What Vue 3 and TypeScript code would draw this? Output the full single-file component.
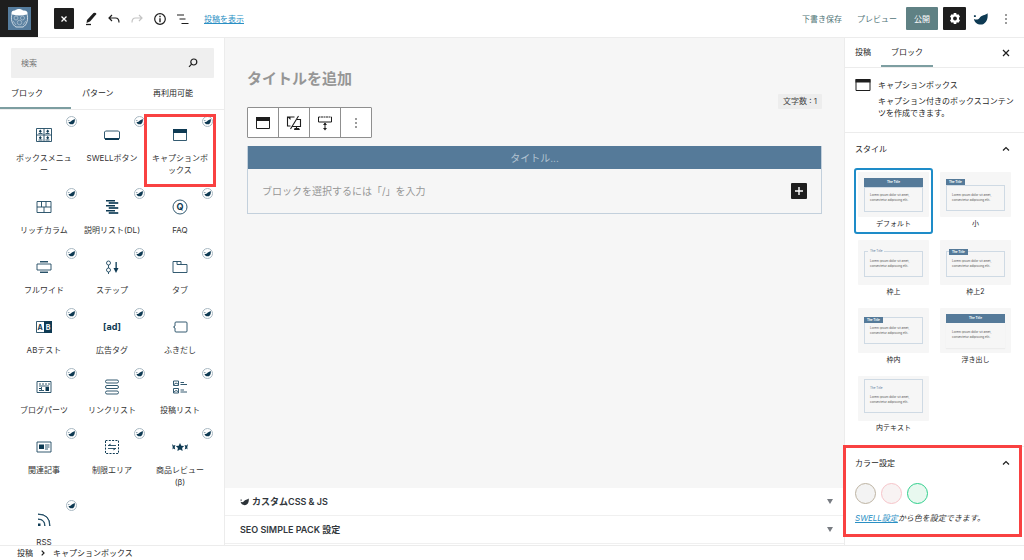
<script setup lang="ts">
import { ref } from 'vue'

interface Glyph { x: number; t: string; size: number; light?: boolean }
interface Block {
  name: string
  line?: string
  solid?: string
  dashed?: string
  glyphs?: Glyph[]
  marked?: boolean
}
interface Variation { name: string; kind: string }

const whale = 'M15.500 2.500C16.500 9.500 13 14.500 8.500 14.500C4.500 14.500 1.500 12 1 8.500C3 9.500 5.500 9.500 7 7.500C9 4.300 13 5 15.500 2.500ZM1 4.500h2v2h-2z'

const blocks: Block[] = [
  {
    name: 'ボックスメニュー',
    line: 'M.5 1.500h15v13h-15zM8 1.500v13M.5 8h15M2.500 6.500h4M9.500 6.500h4M2.500 13h4M9.500 13h4',
    solid: 'M4.300 2.500l1.500 1.800l-1.500 1.800l-1.500-1.800zM11.700 2.500l1.500 1.800l-1.500 1.800l-1.500-1.800zM4.300 9l1.500 1.800l-1.500 1.800l-1.500-1.800zM11.700 9l1.500 1.800l-1.500 1.800l-1.500-1.800z',
  },
  { name: 'SWELLボタン', line: 'M1.500 4h13l1 1v6.500l-1 1h-13l-1-1v-6.500z', solid: 'M1 11h14v2h-14z' },
  { name: 'キャプションボックス', line: 'M1.500 2.500h13v11h-13z', solid: 'M1 2h14v4h-14z', marked: true },
  { name: 'リッチカラム', line: 'M1 2.500h14v11h-14zM1 8h14M5.500 2.500v5.500M10 2.500v5.500M8 8v5.500' },
  { name: '説明リスト(DL)', line: 'M5 3.500h9v1h-9zM5 8.500h9v1h-9zM5 13.500h9v1h-9z', solid: 'M2 1h9v1.500h-9zM2 6h9v1.500h-9zM2 11h9v1.500h-9z' },
  { name: 'FAQ', line: 'M15 8a7 7 0 1 1-14 0a7 7 0 1 1 14 0z', glyphs: [{ x: 8, t: 'Q', size: 9 }] },
  { name: 'フルワイド', line: 'M1 5h14v6h-14zM4 2.500h8M4 13.500h8M4 3h8M4 13h8' },
  { name: 'ステップ', line: 'M6.500 4a2 2 0 1 1-4 0a2 2 0 1 1 4 0zM6.500 11a2 2 0 1 1-4 0a2 2 0 1 1 4 0zM4.500 6v3M4.500 13v2M12 3v8M12.300 3v8', solid: 'M9.500 9h5l-2.500 5z' },
  { name: 'タブ', line: 'M1 13.500v-11h8v3h6v8zM5 2.500v3h4' },
  { name: 'ABテスト', line: 'M.5 2.500h15v11h-15z', solid: 'M8 2h8v12h-8z', glyphs: [{ x: 4, t: 'A', size: 7 }, { x: 12, t: 'B', size: 7, light: true }] },
  { name: '広告タグ', glyphs: [{ x: 8, t: '[ad]', size: 9 }] },
  { name: 'ふきだし', line: 'M4 3h10q1 0 1 1v8q0 1-1 1h-10q-1 0-1-1v-3l-1.500-1l1.500-1v-3q0-1 1-1z' },
  { name: 'ブログパーツ', line: 'M1 2.500h14v11h-14zM3 5h2M6 5h2M9 5h2M12 5h2M3 7h10M3 11.500h5M5.500 8v3', solid: 'M9.500 8h3.500v4h-3.500zM3 9h2v1h-2z' },
  { name: 'リンクリスト', line: 'M3 1h10q1.500 0 1.500 1.500t-1.500 1.500h-10q-1.500 0-1.500-1.500t1.500-1.500zM3 6.500h10q1.500 0 1.500 1.500t-1.500 1.500h-10q-1.500 0-1.500-1.500t1.500-1.500zM3 12h10q1.500 0 1.500 1.500t-1.500 1.500h-10q-1.500 0-1.500-1.500t1.500-1.500z' },
  { name: '投稿リスト', line: 'M1.500 2h5v4.500h-5zM1.500 9.500h5v4.500h-5zM8.500 3.500h3.500M8.500 5.500h6.500M8.500 11h3.500M8.500 13h6.500M2 5.500l2-1.500l2 1M2 13l2-1.500l2 1' },
  { name: '関連記事', line: 'M1 3h14v10h-14zM9 6h4.500M9 8h4.500M9 10h3', solid: 'M3 5.500h5v4.500h-5z' },
  { name: '制限エリア', dashed: 'M1.500 1.500h13v13h-13z', line: 'M4 6.500h8M4 9.500h8', solid: 'M4 6.500l2.500-2v2zM12 9.500l-2.500 2v-2z' },
  { name: '商品レビュー(β)', solid: 'M8 4l1.300 2.700l2.900.4l-2.100 2l.5 2.900l-2.600-1.400l-2.600 1.400l.5-2.900l-2.100-2l2.900-.4zM0 5l1.500 1.500l2-.500l-.8 2l.5 2.500l-1.700-1l-1 1l.2-2.500zM16 5l-1.500 1.500l-2-.5l.8 2l-.5 2.500l1.700-1l1 1l-.2-2.500z' },
  { name: 'RSS', line: 'M2 3q12 0 12 12M2 3.300q11.700 0 11.700 11.700M2 8q7 0 7 7M2 8.300q6.700 0 6.700 6.700', solid: 'M2 12.500h2.500v2.500h-2.500z' },
]

const variations: Variation[] = [
  { name: 'デフォルト', kind: 'bar' },
  { name: '小', kind: 'small' },
  { name: '枠上', kind: 'on-border' },
  { name: '枠上2', kind: 'on-border2' },
  { name: '枠内', kind: 'inside' },
  { name: '浮き出し', kind: 'raised' },
  { name: '内テキスト', kind: 'inner-text' },
]

const colors = ['sand', 'pink', 'green']
const selected = ref('bar')
const query = ref('')
const postTitle = ref('')
const captionTitle = ref('')
</script>

<template>
  <div class="editor">
    <header class="topbar">
      <a class="site" href="#" aria-label="サイト">
        <svg width="23" height="23" viewBox="0 0 23 23">
          <rect width="23" height="23" fill="#557c9d" />
          <path d="M4 7C2.500 12 4 18 8 20H15C19 18 20.500 12 19 7Z" fill="#5d83a2" stroke="#cdd9e3" stroke-width="1" />
          <circle cx="8" cy="11" r="2" fill="none" stroke="#9fb6c9" /><circle cx="14.500" cy="11" r="2" fill="none" stroke="#9fb6c9" />
          <circle cx="11.500" cy="15.500" r="2.200" fill="none" stroke="#9fb6c9" /><path d="M5 14l3 4M18 14l-3 4" stroke="#9fb6c9" />
          <path d="M3.500 7C3 4 5.500 3 7 3.500C9 1.500 13 1.500 15 3.500C18 3 20 4.500 19.500 7Q11.500 10 3.500 7Z" fill="#fff" />
        </svg>
      </a>
      <div class="tools">
        <button class="close-inserter" aria-label="閉じる">
          <svg width="8" height="8" viewBox="0 0 8 8"><path d="M1.500 1.500l5 5M6.500 1.500l-5 5" stroke="#fff" stroke-width="1.300" /></svg>
        </button>
        <button class="tool" aria-label="編集">
          <svg width="16" height="16" viewBox="0 0 16 16"><path d="M4 9L10.500 2Q12.500 1 13.500 3L7 10.500L3.500 12Z" fill="#1e1e1e" /><path d="M3 13.500h5" stroke="#1e1e1e" stroke-width="1.300" /></svg>
        </button>
        <button class="tool" aria-label="元に戻す">
          <svg width="16" height="16" viewBox="0 0 16 16" fill="none" stroke="#1e1e1e" stroke-width="1.200"><path d="M6 4L3 7l3 3M3 7h6.500q3.500 0 3.500 4.500" /></svg>
        </button>
        <button class="tool" aria-label="やり直す" disabled>
          <svg width="16" height="16" viewBox="0 0 16 16" fill="none" stroke="#c4c4c4" stroke-width="1.200"><path d="M10 4l3 3l-3 3M13 7h-6.500q-3.500 0-3.500 4.500" /></svg>
        </button>
        <button class="tool" aria-label="詳細">
          <svg width="16" height="16" viewBox="0 0 16 16"><circle cx="8" cy="8" r="5.300" fill="none" stroke="#1e1e1e" stroke-width="1.200" /><path d="M8 7.300v4M8 4.800v1.400" stroke="#1e1e1e" stroke-width="1.400" /></svg>
        </button>
        <button class="tool" aria-label="リスト表示">
          <svg width="16" height="16" viewBox="0 0 16 16" stroke="#1e1e1e" stroke-width="1.200"><path d="M2 4h7M4.500 8h6M6.500 12.500h7" /></svg>
        </button>
        <a class="link" href="#">投稿を表示</a>
      </div>
      <div class="actions">
        <button class="text-action">下書き保存</button>
        <button class="text-action">プレビュー</button>
        <button class="publish">公開</button>
        <button class="gear" aria-label="設定">
          <svg width="14" height="14" viewBox="0 0 14 14"><path d="M5.800 1h2.400l.5 1.700l1.700-.5l1.600 2.300l-1 1.300v1.400l1 1.300l-1.600 2.300l-1.700-.5l-.5 1.700h-2.400l-.5-1.700l-1.700.5l-1.600-2.300l1-1.300v-1.400l-1-1.300l1.600-2.300l1.700.5z" fill="#fff" /><circle cx="7" cy="6.500" r="1.900" fill="#1e1e1e" /></svg>
        </button>
        <button class="tool whale" aria-label="SWELL">
          <svg width="15" height="15" viewBox="0 0 16 16"><path :d="whale" fill="#0e3a53" /></svg>
        </button>
        <button class="tool more" aria-label="オプション">
          <svg width="4" height="12" viewBox="0 0 4 12" fill="#1e1e1e"><circle cx="2" cy="2" r=".8" /><circle cx="2" cy="6" r=".8" /><circle cx="2" cy="10" r=".8" /></svg>
        </button>
      </div>
    </header>

    <div class="body">
      <aside class="inserter">
        <label class="search">
          <input v-model="query" type="text" placeholder="検索" aria-label="検索" />
          <svg width="10" height="10" viewBox="0 0 10 10" fill="none" stroke="#1e1e1e" stroke-width="1.200"><circle cx="5.800" cy="4" r="3" /><path d="M3.600 6.200L1 8.800" /></svg>
        </label>
        <div class="tabs">
          <button class="tab active">ブロック</button>
          <button class="tab">パターン</button>
          <button class="tab">再利用可能</button>
        </div>
        <div class="blocks">
          <button v-for="b in blocks" :key="b.name" class="block" :class="{ marked: b.marked }">
            <svg class="glyph" width="16" height="16" viewBox="0 0 16 16">
              <path v-if="b.dashed" :d="b.dashed" fill="none" stroke="#0e3a53" stroke-dasharray="2 1.300" />
              <path v-if="b.line" :d="b.line" fill="none" stroke="#1d4861" stroke-width=".9" />
              <path v-if="b.solid" :d="b.solid" fill="#0e3a53" />
              <text v-for="g in b.glyphs" :key="g.t" :x="g.x" :y="8 + g.size * 0.36" :font-size="g.size" :fill="g.light ? '#fff' : '#0e3a53'" font-weight="700" text-anchor="middle">{{ g.t }}</text>
            </svg>
            <span class="label">{{ b.name }}</span>
            <span class="badge"><svg width="7" height="7" viewBox="0 0 16 16"><path :d="whale" fill="#0e3a53" /></svg></span>
          </button>
        </div>
      </aside>

      <main class="canvas">
        <div class="content">
          <input v-model="postTitle" class="post-title" type="text" placeholder="タイトルを追加" aria-label="タイトルを追加" />
          <div class="count-row"><span class="count">文字数 : 1</span></div>
          <div class="toolbar">
            <button aria-label="キャプションボックス">
              <svg width="16" height="16" viewBox="0 0 16 16"><path d="M1.500 2.500h13v11h-13z" fill="#fff" stroke="#1e1e1e" /><path d="M1 2h14v4h-14z" fill="#1e1e1e" /></svg>
            </button>
            <button aria-label="表示デバイス">
              <svg width="16" height="16" viewBox="0 0 16 16" fill="none" stroke="#1e1e1e" stroke-width="1.100"><path d="M8.500 2h-7v9h3M11 4.500h3.500v7h-8M12.500 1l-8 13M10.500 11.500v2M8 14h5" /><path d="M1.500 2h3v3zM9 13h4l1 2h-6z" fill="#1e1e1e" stroke="none" /></svg>
            </button>
            <button aria-label="余白">
              <svg width="16" height="16" viewBox="0 0 16 16" fill="none" stroke="#1e1e1e"><path d="M1.500 2v5h13v-5" /><path d="M1.500 2h13" stroke-dasharray="2 .5" /><path d="M8 8v6" /><path d="M8 7.500l2 2.500h-4zM8 15.500l2-2.500h-4z" fill="#1e1e1e" stroke="none" /></svg>
            </button>
            <button aria-label="オプション">
              <svg width="4" height="12" viewBox="0 0 4 12" fill="#1e1e1e"><circle cx="2" cy="2" r=".8" /><circle cx="2" cy="6" r=".8" /><circle cx="2" cy="10" r=".8" /></svg>
            </button>
          </div>
          <section class="caption-box">
            <input v-model="captionTitle" class="caption-title" type="text" placeholder="タイトル..." aria-label="ボックスタイトル" />
            <div class="caption-body">
              <p>ブロックを選択するには「/」を入力</p>
              <button class="add" aria-label="ブロックを追加">
                <svg width="10" height="10" viewBox="0 0 10 10"><path d="M5 1v8M1 5h8" stroke="#fff" stroke-width="1.400" /></svg>
              </button>
            </div>
          </section>
        </div>
        <div class="metaboxes">
          <button class="metabox">
            <svg width="9" height="9" viewBox="0 0 16 16"><path :d="whale" fill="#2c3338" /></svg>
            <span>カスタムCSS &amp; JS</span>
            <svg class="arrow" width="6" height="5" viewBox="0 0 6 5"><path d="M0 0h6l-3 5z" fill="#787c82" /></svg>
          </button>
          <button class="metabox">
            <span>SEO SIMPLE PACK 設定</span>
            <svg class="arrow" width="6" height="5" viewBox="0 0 6 5"><path d="M0 0h6l-3 5z" fill="#787c82" /></svg>
          </button>
        </div>
      </main>

      <aside class="settings">
        <div class="side-tabs">
          <button class="side-tab">投稿</button>
          <button class="side-tab active">ブロック</button>
          <button class="side-close" aria-label="閉じる">
            <svg width="8" height="8" viewBox="0 0 8 8"><path d="M1 1l6 6M7 1l-6 6" stroke="#1e1e1e" stroke-width="1.200" /></svg>
          </button>
        </div>
        <div class="card">
          <svg width="16" height="16" viewBox="0 0 16 16"><path d="M1 2.500h14v11h-14z" fill="#fff" stroke="#1e1e1e" /><path d="M.5 2h15v3.500h-15z" fill="#1e1e1e" /></svg>
          <div>
            <h2>キャプションボックス</h2>
            <p>キャプション付きのボックスコンテンツを作成できます。</p>
          </div>
        </div>
        <section class="panel">
          <button class="panel-title">スタイル
            <svg width="8" height="6" viewBox="0 0 8 6"><path d="M1 4.500l3-3l3 3" fill="none" stroke="#1e1e1e" stroke-width="1.200" /></svg>
          </button>
          <div class="styles">
            <button v-for="v in variations" :key="v.kind" class="style" :class="{ selected: selected === v.kind }" @click="selected = v.kind">
              <span class="thumb" :class="v.kind">
                <span class="t-title">The Title</span>
                <span class="t-body">Lorem ipsum dolor sit amet, consectetur adipiscing elit.</span>
              </span>
              <span class="style-name">{{ v.name }}</span>
            </button>
          </div>
        </section>
        <section class="panel colors">
          <button class="panel-title">カラー設定
            <svg width="8" height="6" viewBox="0 0 8 6"><path d="M1 4.500l3-3l3 3" fill="none" stroke="#1e1e1e" stroke-width="1.200" /></svg>
          </button>
          <div class="swatches">
            <button v-for="c in colors" :key="c" class="swatch" :class="c" :aria-label="c"></button>
          </div>
          <p class="hint"><a class="link" href="#">SWELL設定</a>から色を設定できます。</p>
        </section>
      </aside>
    </div>

    <footer class="crumbs">
      <button>投稿</button>
      <svg width="4" height="6" viewBox="0 0 4 6"><path d="M.7.700l2.300 2.300l-2.300 2.300" fill="none" stroke="#1e1e1e" stroke-width="1.200" /></svg>
      <button>キャプションボックス</button>
    </footer>
  </div>
</template>

<style>
body { margin: 0; }
</style>

<style scoped>
.editor, .editor * { box-sizing: border-box; }
.editor {
  display: flex;
  flex-direction: column;
  height: 100vh;
  overflow: hidden;
  background: #fff;
  color: #1e1e1e;
  font-family: Inter, "Noto Sans CJK JP", sans-serif;
  font-size: 8px;
  line-height: 12px;
}
button, input { font: inherit; color: inherit; border: 0; padding: 0; margin: 0; background: none; outline: none; }
button svg { display: block; }
p, h2 { margin: 0; font: inherit; }
.link { color: #2a8fc4; text-decoration: underline; }

.topbar { display: flex; align-items: center; height: 38px; flex: none; border-bottom: 1px solid #ececec; }
.site { display: flex; align-items: center; justify-content: center; width: 38px; height: 37px; background: #1e1e1e; }
.tools { display: flex; align-items: center; gap: 7px; flex: 1; padding-left: 16px; }
.close-inserter { display: grid; place-items: center; width: 20px; height: 21px; margin-right: 2px; border-radius: 1px; background: #1e1e1e; }
.tool { display: grid; place-items: center; }
.tools .link { margin-left: 6px; }
.actions { display: flex; align-items: center; padding-right: 16px; }
.text-action { margin-right: 15px; color: #527578; }
.actions .publish { width: 32px; height: 23px; margin-left: -6px; border-radius: 1px; background: #5f8184; color: #fff; }
.gear { display: grid; place-items: center; width: 23px; height: 23px; margin-left: 5px; border-radius: 1px; background: #1e1e1e; }
.whale { margin-left: 7px; }
.more { margin-left: 16px; }

.body { display: flex; flex: 1; min-height: 0; }
.inserter { width: 225px; flex: none; overflow: hidden; border-right: 1px solid #ececec; }
.search { display: flex; align-items: center; height: 30px; margin: 10px 10px 0 11px; padding: 0 16px 0 10px; border-radius: 1px; background: #efefef; }
.search input { flex: 1; min-width: 0; }
.search input::placeholder { color: #757575; opacity: 1; }
.tabs { display: flex; border-bottom: 1px solid #ececec; }
.tab { width: 71px; height: 31px; padding-left: 11px; text-align: left; border-bottom: 2px solid transparent; }
.tab.active { border-bottom-color: #7d9ea1; }
.blocks { display: grid; grid-template-columns: repeat(3, 1fr); padding: 5px 10px 0; }
.block { position: relative; display: flex; flex-direction: column; align-items: center; padding: 12px 5px 11px; }
.glyph { margin-bottom: 9px; overflow: visible; }
.label { color: #333; word-break: break-all; text-align: center; }
.badge { position: absolute; top: 1px; right: 1px; display: grid; place-items: center; width: 11px; height: 11px; border: 1px solid #a9b9c3; border-radius: 50%; background: #fff; }
.marked::after { content: ""; position: absolute; inset: -1px -2px 0; border: 3px solid #f94141; }

.canvas { display: flex; flex-direction: column; flex: 1; min-width: 0; background: #f6f6f6; }
.content { flex: 1; padding: 28px 22px 0; }
.post-title { display: block; width: 100%; height: 24px; font-size: 15px; font-weight: 700; }
.post-title::placeholder { color: #969696; opacity: 1; }
.count-row { display: flex; justify-content: flex-end; margin-top: 4px; }
.count { padding: 1px 5px 2px; border-radius: 1px; background: #ededed; color: #444; }
.toolbar { display: inline-flex; margin-top: -2px; border: 1px solid #8f8f8f; border-radius: 1px; background: #fff; vertical-align: top; }
.toolbar button { display: grid; place-items: center; width: 31px; height: 29px; border-right: 1px solid #8f8f8f; }
.toolbar button:last-child { width: 30px; border-right: 0; }
.caption-box { margin-top: 8px; border: 1px solid #c3d0dc; border-top: 0; font-size: 10px; }
.caption-title { display: block; width: 100%; height: 23px; background: #557a99; color: #fff; text-align: center; }
.caption-title::placeholder { color: #b3c4d2; opacity: 1; }
.caption-body { display: flex; align-items: center; justify-content: space-between; height: 44px; padding: 0 14px; color: #969696; }
.add { display: grid; place-items: center; width: 16px; height: 16px; border-radius: 1px; background: #1e1e1e; }
.metaboxes { padding-bottom: 1px; background: #fff; }
.metabox { display: flex; align-items: center; gap: 3px; width: 100%; height: 28px; padding: 0 11px 0 15px; border-bottom: 1px solid #f0f0f0; color: #32373c; font-size: 9px; font-weight: 600; }
.arrow { margin-left: auto; }

.settings { width: 180px; flex: none; border-left: 1px solid #ececec; }
.side-tabs { display: flex; height: 30px; border-bottom: 1px solid #ececec; }
.side-tab { padding: 0 10px; border-bottom: 2px solid transparent; }
.side-tab.active { border-bottom-color: #7d9ea1; }
.side-close { display: grid; place-items: center; margin-left: auto; padding: 0 14px; }
.card { display: flex; gap: 7px; padding: 9px 10px 13px; }
.card svg { flex: none; }
.card > div { padding-top: 2px; }
.card h2 { margin-bottom: 4px; }
.panel { border-top: 1px solid #ececec; }
.panel-title { display: flex; align-items: center; justify-content: space-between; width: 100%; height: 32px; padding: 0 14px 0 10px; }
.styles { display: grid; grid-template-columns: repeat(2, 79px); gap: 2px 3px; padding: 3px 9px 8px; }
.style { display: flex; flex-direction: column; padding: 2px; border: 2px solid transparent; border-radius: 3px; }
.style.selected { border-color: #1e8cc8; }
.thumb { display: flex; flex-direction: column; justify-content: center; align-items: flex-start; width: 71px; height: 45px; padding: 0 6px; border-radius: 1px; background: #f6f6f6; font-size: 3px; line-height: 5px; text-align: left; }
.style-name { font-size: 7px; line-height: 13px; text-align: center; }
.t-title { z-index: 1; padding: 1px 3px 0; background: #557a99; color: #fff; font-weight: 700; }
.t-body { width: 59px; padding: 7px 8px 7px 5px; border: 1px solid #cfdae4; color: #555; }
.bar .t-title, .raised .t-title { width: 59px; padding: 2px; text-align: center; }
.bar .t-body { padding-bottom: 8px; padding-top: 5px; }
.raised .t-body { padding-top: 6px; border-color: transparent; box-shadow: 0 1px 1px #ececec; }
.on-border .t-title { margin: 0 0 -3px 4px; padding: 0 2px; background: #f6f6f6; color: #557a99; font-weight: 400; }
.on-border2 .t-title { margin: 0 0 -4px 3px; }
.inside .t-title { margin-bottom: -6px; }
.inside .t-body { padding-top: 8px; }
.inner-text .t-title { margin: 0 0 -12px 3px; background: none; color: #557a99; font-weight: 400; }
.inner-text .t-body { padding-top: 15px; }
.colors { position: relative; }
.colors::after { content: ""; position: absolute; inset: -2px 2px 6px -2px; border: 3px solid #f94141; pointer-events: none; }
.swatches { display: flex; gap: 5px; padding: 4px 10px; }
.swatch { width: 21px; height: 21px; border: 1px solid #bdb3a2; border-radius: 50%; background: #f3f3f3; }
.swatch.pink { border-color: #f6c4c9; background: #f8f3f3; }
.swatch.green { border-color: #2fcf8c; background: #e8f8ef; }
.hint { padding: 4px 10px 19px; color: #333; font-style: italic; }

.crumbs { display: flex; align-items: center; gap: 8px; height: 15px; flex: none; padding-left: 17px; border-top: 1px solid #ececec; }
</style>
